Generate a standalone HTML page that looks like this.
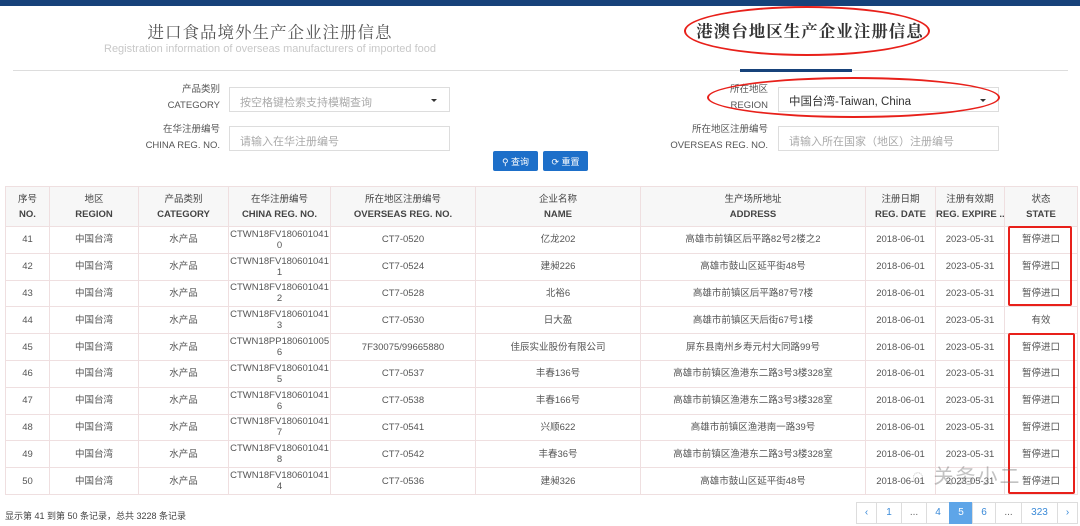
<!DOCTYPE html>
<html><head><meta charset="utf-8"><style>
*{margin:0;padding:0;box-sizing:border-box}
body{width:1080px;height:526px;background:#fff;font-family:"Liberation Sans","Noto Sans CJK SC",sans-serif;color:#333;position:relative;overflow:hidden}
.a{position:absolute}
.topbar{left:0;top:0;width:1080px;height:6px;background:#17427a}
.t1{left:0;width:540px;text-align:center;top:19px;font-family:"Noto Serif CJK SC",serif;font-size:16.5px;color:#555;letter-spacing:1px}
.t1e{left:0;width:540px;text-align:center;top:43px;font-size:11px;color:#c8c8c8}
.t2{left:540px;width:540px;text-align:center;top:18px;font-family:"Noto Serif CJK SC",serif;font-weight:bold;font-size:16.5px;color:#333;letter-spacing:1px}
.hr{left:13px;top:70px;width:1055px;height:1px;background:#ddd}
.ul{left:740px;top:69px;width:112px;height:3px;background:#17427a}
.lab{text-align:right;font-size:9.5px;color:#555;line-height:16px}
.inp{border:1px solid #ddd;height:25px;font-size:11px;color:#aaa;padding:6px 10px;background:#fff}
.caret{position:absolute;right:12px;top:11px;border-left:3px solid transparent;border-right:3px solid transparent;border-top:3px solid #333}
.btn{background:#1d6fc9;color:#fff;font-size:9px;height:20px;border-radius:2px;padding:4px 0;text-align:center}
table{position:absolute;left:5px;top:186px;width:1072px;border-collapse:collapse;table-layout:fixed}
td,th{border:1px solid #efdfe0;text-align:center;font-size:9.5px;color:#555;font-weight:normal;line-height:11px;overflow:hidden;white-space:nowrap}
th{height:40px;background:#f7f7f7;font-weight:bold;color:#444;font-size:9.5px;line-height:15px}
th span{font-weight:normal}
td{height:26.8px}
.red{position:absolute;border:2px solid #e8201a;border-radius:2px}
.ell{position:absolute;border:2px solid #e8201a;border-radius:50%}
.pg{top:502px;height:22px;border:1px solid #ddd;font-size:10px;color:#3a8ad8;text-align:center;line-height:20px}
</style></head><body>
<div class="a topbar"></div>
<div class="a t1">进口食品境外生产企业注册信息</div>
<div class="a t1e">Registration information of overseas manufacturers of imported food</div>
<div class="a t2">港澳台地区生产企业注册信息</div>
<div class="ell" style="left:684px;top:6px;width:246px;height:50px"></div>
<div class="a hr"></div>
<div class="a ul"></div>

<div class="a lab" style="left:120px;top:82px;width:100px">产品类别<br>CATEGORY</div>
<div class="a inp" style="left:229px;top:87px;width:221px">按空格键检索支持模糊查询<span class="caret"></span></div>
<div class="a lab" style="left:120px;top:122px;width:100px">在华注册编号<br>CHINA REG. NO.</div>
<div class="a inp" style="left:229px;top:126px;width:221px">请输入在华注册编号</div>

<div class="a lab" style="left:668px;top:82px;width:100px">所在地区<br>REGION</div>
<div class="a inp" style="left:778px;top:87px;width:221px;color:#333;font-size:11.5px;padding-top:5px">中国台湾-Taiwan, China<span class="caret"></span></div>
<div class="ell" style="left:707px;top:77px;width:293px;height:41px"></div>
<div class="a lab" style="left:640px;top:122px;width:128px">所在地区注册编号<br>OVERSEAS REG. NO.</div>
<div class="a inp" style="left:778px;top:126px;width:221px">请输入所在国家（地区）注册编号</div>

<div class="a btn" style="left:493px;top:151px;width:45px">&#9906; 查询</div>
<div class="a btn" style="left:543px;top:151px;width:45px">&#10227; 重置</div>

<table>
<colgroup><col style="width:44px"><col style="width:89px"><col style="width:90px"><col style="width:102px"><col style="width:145px"><col style="width:165px"><col style="width:225px"><col style="width:70px"><col style="width:69px"><col style="width:73px"></colgroup>
<tr><th><span>序号</span><br>NO.</th><th><span>地区</span><br>REGION</th><th><span>产品类别</span><br>CATEGORY</th><th><span>在华注册编号</span><br>CHINA REG. NO.</th><th><span>所在地区注册编号</span><br>OVERSEAS REG. NO.</th><th><span>企业名称</span><br>NAME</th><th><span>生产场所地址</span><br>ADDRESS</th><th><span>注册日期</span><br>REG. DATE</th><th><span>注册有效期</span><br>REG. EXPIRE ...</th><th><span>状态</span><br>STATE</th></tr>
<tr><td>41</td><td>中国台湾</td><td>水产品</td><td>CTWN18FV180601041<br>0</td><td>CT7-0520</td><td>亿龙202</td><td>高雄市前镇区后平路82号2楼之2</td><td>2018-06-01</td><td>2023-05-31</td><td>暂停进口</td></tr>
<tr><td>42</td><td>中国台湾</td><td>水产品</td><td>CTWN18FV180601041<br>1</td><td>CT7-0524</td><td>建昶226</td><td>高雄市鼓山区延平街48号</td><td>2018-06-01</td><td>2023-05-31</td><td>暂停进口</td></tr>
<tr><td>43</td><td>中国台湾</td><td>水产品</td><td>CTWN18FV180601041<br>2</td><td>CT7-0528</td><td>北裕6</td><td>高雄市前镇区后平路87号7楼</td><td>2018-06-01</td><td>2023-05-31</td><td>暂停进口</td></tr>
<tr><td>44</td><td>中国台湾</td><td>水产品</td><td>CTWN18FV180601041<br>3</td><td>CT7-0530</td><td>日大盈</td><td>高雄市前镇区天后街67号1楼</td><td>2018-06-01</td><td>2023-05-31</td><td>有效</td></tr>
<tr><td>45</td><td>中国台湾</td><td>水产品</td><td>CTWN18PP180601005<br>6</td><td>7F30075/99665880</td><td>佳辰实业股份有限公司</td><td>屏东县南州乡寿元村大同路99号</td><td>2018-06-01</td><td>2023-05-31</td><td>暂停进口</td></tr>
<tr><td>46</td><td>中国台湾</td><td>水产品</td><td>CTWN18FV180601041<br>5</td><td>CT7-0537</td><td>丰春136号</td><td>高雄市前镇区渔港东二路3号3楼328室</td><td>2018-06-01</td><td>2023-05-31</td><td>暂停进口</td></tr>
<tr><td>47</td><td>中国台湾</td><td>水产品</td><td>CTWN18FV180601041<br>6</td><td>CT7-0538</td><td>丰春166号</td><td>高雄市前镇区渔港东二路3号3楼328室</td><td>2018-06-01</td><td>2023-05-31</td><td>暂停进口</td></tr>
<tr><td>48</td><td>中国台湾</td><td>水产品</td><td>CTWN18FV180601041<br>7</td><td>CT7-0541</td><td>兴顺622</td><td>高雄市前镇区渔港南一路39号</td><td>2018-06-01</td><td>2023-05-31</td><td>暂停进口</td></tr>
<tr><td>49</td><td>中国台湾</td><td>水产品</td><td>CTWN18FV180601041<br>8</td><td>CT7-0542</td><td>丰春36号</td><td>高雄市前镇区渔港东二路3号3楼328室</td><td>2018-06-01</td><td>2023-05-31</td><td>暂停进口</td></tr>
<tr><td>50</td><td>中国台湾</td><td>水产品</td><td>CTWN18FV180601041<br>4</td><td>CT7-0536</td><td>建昶326</td><td>高雄市鼓山区延平街48号</td><td>2018-06-01</td><td>2023-05-31</td><td>暂停进口</td></tr>
</table>
<div class="red" style="left:1008px;top:226px;width:64px;height:80px"></div>
<div class="red" style="left:1008px;top:333px;width:67px;height:161px"></div>
<div class="a" style="left:912px;top:460px;font-size:20px;color:rgba(120,120,120,0.45);letter-spacing:2px">◌ 关务小二</div>

<div class="a" style="left:5px;top:509px;font-size:9px;color:#444">显示第 41 到第 50 条记录，总共 3228 条记录</div>
<div class="a pg" style="left:856px;width:21px">‹</div>
<div class="a pg" style="left:876px;width:26px">1</div>
<div class="a pg" style="left:901px;width:26px;color:#666">...</div>
<div class="a pg" style="left:926px;width:24px">4</div>
<div class="a pg" style="left:949px;width:24px;background:#5ea5e8;border-color:#5ea5e8;color:#fff">5</div>
<div class="a pg" style="left:972px;width:24px">6</div>
<div class="a pg" style="left:995px;width:27px;color:#666">...</div>
<div class="a pg" style="left:1021px;width:37px">323</div>
<div class="a pg" style="left:1057px;width:21px">›</div>
</body></html>
